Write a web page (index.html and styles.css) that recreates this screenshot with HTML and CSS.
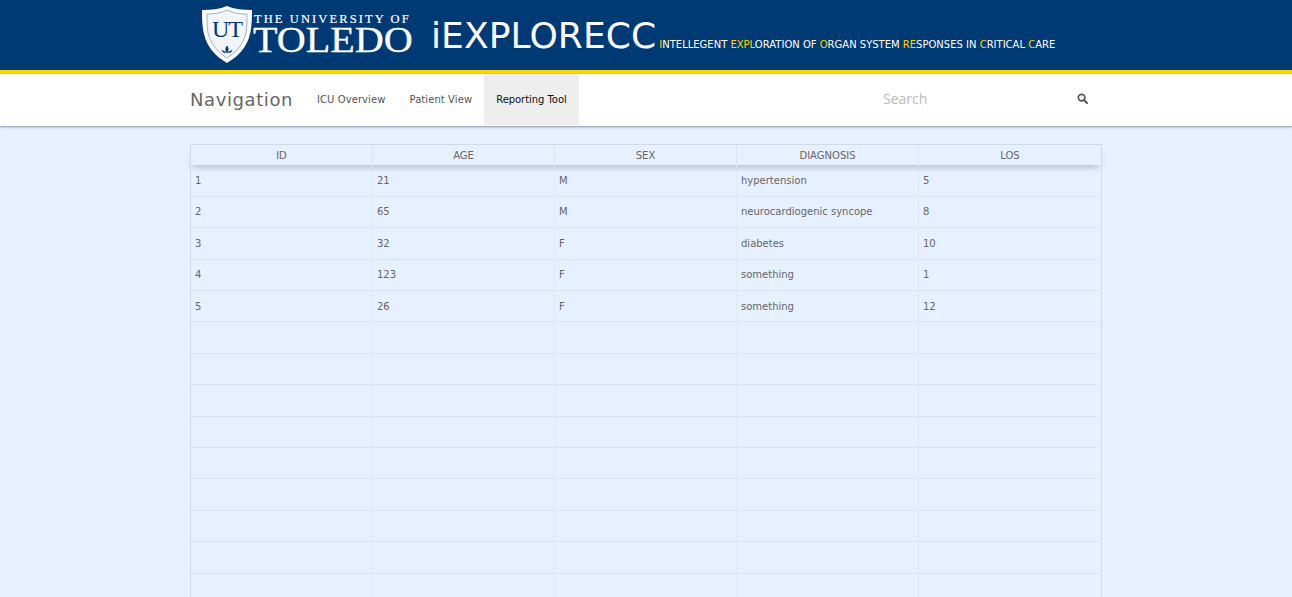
FILE: index.html
```html
<!DOCTYPE html>
<html lang="en">
<head>
<meta charset="utf-8">
<title>iEXPLORECC</title>
<link rel="stylesheet" href="styles.css">
</head>
<body>
<header class="banner">
  <div class="banner-inner">
    <div class="logo">
      <svg class="shield" width="50" height="58" viewBox="0 0 50 58" aria-hidden="true">
        <path d="M0 4 C9 4 18 3 25 0 C32 3 41 4 50 4 C50 10 50 20 48 28 C45 42 35 51 25 57 C15 51 5 42 2 28 C0 20 0 10 0 4 Z" fill="#fff"/>
        <path d="M5 8 C12 8 20 7 25 4 C30 7 38 8 45 8 C45 14 45 21 44 27 C41 39 33 47 25 52 C17 47 9 39 6 27 C5 21 5 14 5 8 Z" fill="#f2f5f9" stroke="#9db2ca" stroke-width="1"/>
        <text x="25" y="31" text-anchor="middle" class="shield-text">UT</text>
        <path d="M25 40 C23 43 24 45 25 47 C26 45 27 43 25 40 Z M20 44 C21 47 23 47 24 46 M30 44 C29 47 27 47 26 46" fill="#003a75" stroke="#003a75" stroke-width=".8"/>
      </svg>
      <div class="wordmark">
        <span class="wordmark-top">THE UNIVERSITY OF</span>
        <span class="wordmark-main">TOLEDO</span>
      </div>
    </div>
    <h1 class="app-title">iEXPLORECC</h1>
    <p class="tagline"><b>I</b>NTELLEGENT <b>EXPL</b>ORATION OF <b>O</b>RGAN SYSTEM <b>RE</b>SPONSES IN <b>C</b>RITICAL <b>C</b>ARE</p>
  </div>
</header>
<nav class="navbar">
  <div class="navbar-inner">
    <span class="brand">Navigation</span>
    <a class="nav-link">ICU Overview</a>
    <a class="nav-link">Patient View</a>
    <a class="nav-link active">Reporting Tool</a>
    <div class="search">
      <span class="search-text">Search</span>
      <svg class="search-icon" width="11" height="11" viewBox="0 0 11 11" aria-hidden="true">
        <circle cx="4.6" cy="4.6" r="3.3" fill="none" stroke="#555" stroke-width="1.7"/>
        <path d="M7 7 L10 10" stroke="#555" stroke-width="2" stroke-linecap="round"/>
      </svg>
    </div>
  </div>
</nav>
<main class="content">
  <div class="grid-table">
    <div class="head-row">
      <div class="head-cell">ID</div><div class="head-cell">AGE</div><div class="head-cell">SEX</div><div class="head-cell">DIAGNOSIS</div><div class="head-cell">LOS</div>
    </div>
    <div class="row"><div class="cell">1</div><div class="cell">21</div><div class="cell">M</div><div class="cell">hypertension</div><div class="cell">5</div></div>
    <div class="row"><div class="cell">2</div><div class="cell">65</div><div class="cell">M</div><div class="cell">neurocardiogenic syncope</div><div class="cell">8</div></div>
    <div class="row"><div class="cell">3</div><div class="cell">32</div><div class="cell">F</div><div class="cell">diabetes</div><div class="cell">10</div></div>
    <div class="row"><div class="cell">4</div><div class="cell">123</div><div class="cell">F</div><div class="cell">something</div><div class="cell">1</div></div>
    <div class="row"><div class="cell">5</div><div class="cell">26</div><div class="cell">F</div><div class="cell">something</div><div class="cell">12</div></div>
    <div class="row"><div class="cell"></div><div class="cell"></div><div class="cell"></div><div class="cell"></div><div class="cell"></div></div>
    <div class="row"><div class="cell"></div><div class="cell"></div><div class="cell"></div><div class="cell"></div><div class="cell"></div></div>
    <div class="row"><div class="cell"></div><div class="cell"></div><div class="cell"></div><div class="cell"></div><div class="cell"></div></div>
    <div class="row"><div class="cell"></div><div class="cell"></div><div class="cell"></div><div class="cell"></div><div class="cell"></div></div>
    <div class="row"><div class="cell"></div><div class="cell"></div><div class="cell"></div><div class="cell"></div><div class="cell"></div></div>
    <div class="row"><div class="cell"></div><div class="cell"></div><div class="cell"></div><div class="cell"></div><div class="cell"></div></div>
    <div class="row"><div class="cell"></div><div class="cell"></div><div class="cell"></div><div class="cell"></div><div class="cell"></div></div>
    <div class="row"><div class="cell"></div><div class="cell"></div><div class="cell"></div><div class="cell"></div><div class="cell"></div></div>
    <div class="row"><div class="cell"></div><div class="cell"></div><div class="cell"></div><div class="cell"></div><div class="cell"></div></div>
  </div>
</main>
</body>
</html>
```
FILE: styles.css
```css
* { box-sizing: border-box; }
html, body { margin: 0; height: 100%; overflow: hidden; }
body { background: #e6f0ff; font-family: "DejaVu Sans", sans-serif; color: #555; }

.banner { height: 74px; background: #003a75; border-bottom: 4px solid #ffd400; }
.banner-inner { display: flex; align-items: flex-start; padding-left: 202px; }
.logo { display: flex; align-items: flex-start; width: 229px; padding-top: 6px; }
.shield { flex: none; }
.shield-text { font-family: "Liberation Serif", serif; font-size: 24px; fill: #003a75; letter-spacing: -1px; }
.wordmark { display: flex; flex-direction: column; margin-left: 1px; color: #fff; font-family: "Liberation Serif", serif; }
.wordmark-top { font-size: 12.5px; line-height: 12px; letter-spacing: 2.1px; margin: 7px 0 0 1px; white-space: nowrap; -webkit-text-stroke: .2px #fff; }
.wordmark-main { font-size: 36px; line-height: 30px; transform: scaleX(1.115); transform-origin: left center; -webkit-text-stroke: .3px #fff; }
.app-title { margin: 13px 0 0; font-family: "DejaVu Sans", sans-serif; font-weight: 400; font-size: 36px; line-height: 46px; letter-spacing: .1px; color: #fff; white-space: nowrap; }
.tagline { margin: 38px 0 0 3px; font-size: 10px; line-height: 13px; color: #fff; white-space: nowrap; }
.tagline b { font-weight: 400; color: #ffd400; }

.navbar { height: 52px; background: #fff; box-shadow: 0 1px 2px rgba(60, 70, 90, .55); position: relative; }
.navbar-inner { width: 912px; margin: 0 auto; display: flex; align-items: flex-start; height: 51px; }
.brand { font-size: 18px; line-height: 51px; color: #666; width: 115px; letter-spacing: .6px; }
.nav-link { font-size: 10px; line-height: 51px; padding: 0 12px; color: #555; white-space: nowrap; letter-spacing: .08px; }
.nav-link.active { background: #eee; color: #111; letter-spacing: -.05px; }
.search { margin-left: auto; width: 219px; display: flex; align-items: center; justify-content: space-between; height: 49px; padding-right: 14px; }
.search-text { font-family: "Open Sans", sans-serif; font-size: 14px; color: #bbb; }
.search-icon { flex: none; }

.content { width: 912px; margin: 18px auto 0; }
.grid-table { border-top: 1px solid #cfd9ea; }
.head-row { display: grid; grid-template-columns: repeat(4, 182px) 1fr; height: 20.45px; box-shadow: 0 5px 6px -3px rgba(80, 90, 110, .35); position: relative; }
.head-cell { font-size: 10px; line-height: 22.5px; text-align: center; color: #666; border-left: 1px solid #dbe5f4; }
.head-cell:first-child { border-left-color: #cfd9ea; }
.head-cell:last-child { border-right: 1px solid #cfd9ea; }
.row { display: grid; grid-template-columns: repeat(4, 182px) 1fr; height: 31.4px; border-bottom: 1px solid #d9e4f4; }
.cell { font-size: 10px; line-height: 30px; padding: .5px 0 0 4px; color: #666; border-left: 1px solid #e0e9f7; }
.cell:first-child { border-left-color: #cfd9ea; }
.cell:last-child { border-right: 1px solid #cfd9ea; }
```
